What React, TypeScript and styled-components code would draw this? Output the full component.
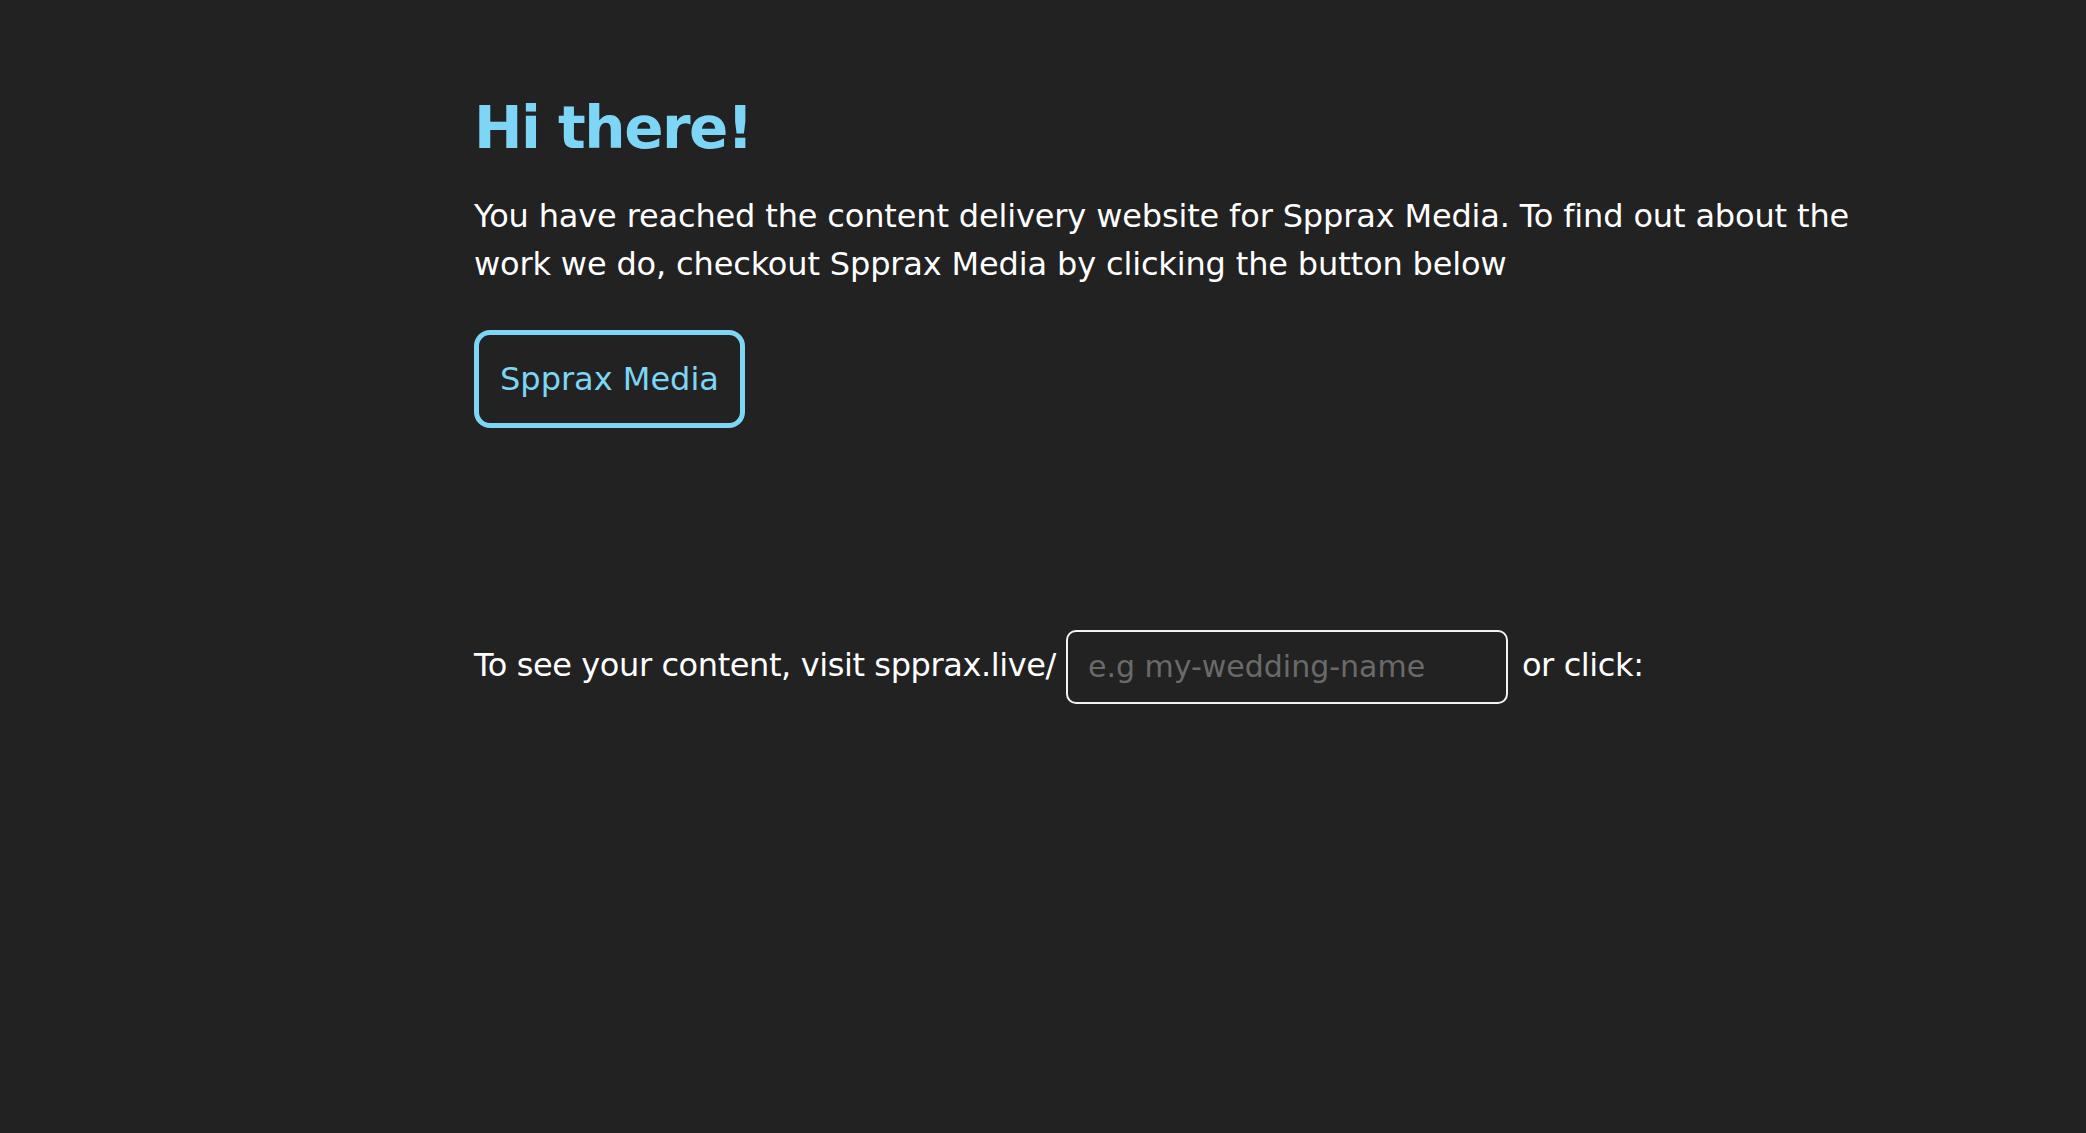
import styled, { createGlobalStyle } from 'styled-components';

const GlobalStyle = createGlobalStyle`
  html, body {
    margin: 0;
    padding: 0;
    background-color: #222222;
  }
  body {
    min-height: 100vh;
    font-family: 'DejaVu Sans', 'Liberation Sans', sans-serif;
    color: #ffffff;
  }
`;

export default function App() {
  return (
    <>
      <GlobalStyle />
      <Main>
        <Title>Hi there!</Title>
        <Intro>
          You have reached the content delivery website for Spprax Media. To find out about the
          work we do, checkout Spprax Media by clicking the button below
        </Intro>
        <MediaButton href='#'>Spprax Media</MediaButton>
        <VisitRow>
          <VisitText>To see your content, visit spprax.live/</VisitText>
          <SlugInput type='text' placeholder='e.g my-wedding-name' />
          <VisitText>or click:</VisitText>
        </VisitRow>
      </Main>
    </>
  );
}

const Main = styled.main`
  box-sizing: border-box;
  width: 1884px;
  padding: 94px 0 0 474px;
  display: flex;
  flex-direction: column;
  align-items: flex-start;
`;

const Title = styled.h1`
  margin: 0;
  font-size: 58px;
  line-height: 1.2;
  font-weight: 700;
  letter-spacing: -1.5px;
  color: #7dd6f5;
`;

const Intro = styled.p`
  margin: 28px 0 0;
  font-size: 32px;
  line-height: 48px;
  letter-spacing: -0.15px;
  color: #ffffff;
`;

const MediaButton = styled.a`
  margin-top: 42px;
  padding: 20px 21px;
  border: 5px solid #7dd6f5;
  border-radius: 16px;
  font-size: 32px;
  line-height: 48px;
  color: #7dd6f5;
  text-decoration: none;
`;

const VisitRow = styled.div`
  margin-top: 202px;
  display: flex;
  align-items: center;
`;

const VisitText = styled.span`
  font-size: 32px;
  line-height: 48px;
  letter-spacing: -0.4px;
  margin-top: -4px;
  white-space: nowrap;
`;

const SlugInput = styled.input`
  box-sizing: border-box;
  width: 442px;
  height: 74px;
  margin: 0 14px 0 10px;
  padding: 0 20px;
  border: 2px solid #f2f2f2;
  border-radius: 10px;
  background: transparent;
  font-family: 'DejaVu Sans', 'Liberation Sans', sans-serif;
  font-size: 30px;
  color: #ffffff;
  outline: none;
  &::placeholder {
    color: #6a6a6a;
  }
`;
